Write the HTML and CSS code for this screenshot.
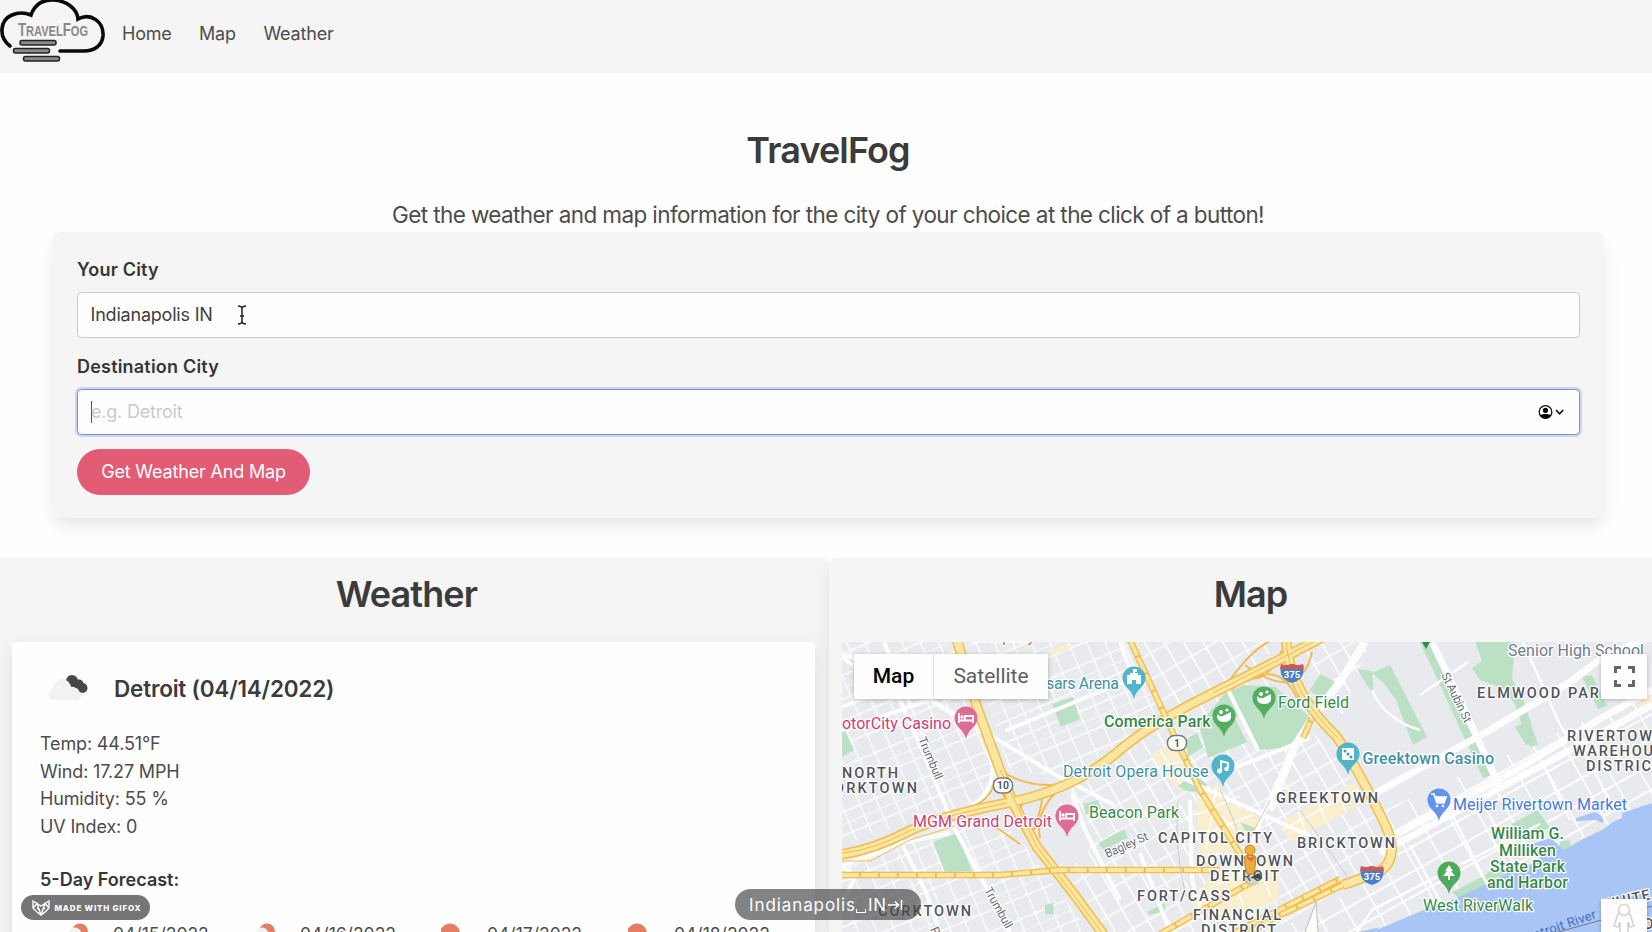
FILE: index.html
```html
<!DOCTYPE html>
<html lang="en">
<head>
<meta charset="utf-8">
<title>TravelFog</title>
<link rel="stylesheet" href="styles.css">
</head>
<body>
<nav class="navbar">
  <svg class="logo" viewBox="0 0 106 66" width="106" height="66">
    <g fill="none" stroke="#090909" stroke-width="3.6" stroke-linecap="round">
      <path d="M10 46C-2 37 0 20 12 15Q21 11 31 15C35 3 45 -1 54 0C66 1 77 8 78 19C91 12 104 22 103 36C102 46 94 51 84 51H60"/>
    </g>
    <text x="18" y="36" textLength="70" lengthAdjust="spacingAndGlyphs" class="logo-text"><tspan font-size="18">T</tspan>RAVEL<tspan font-size="18">F</tspan>OG</text>
    <g fill="#8b8b8b" stroke="#222" stroke-width="1.5"><rect x="20" y="40.5" width="36" height="4.5" rx="2"/><rect x="13.5" y="48.5" width="36" height="4.5" rx="2"/><rect x="23.5" y="56.5" width="36" height="4.5" rx="2"/></g>
  </svg>
  <a class="nav-home">Home</a><a class="nav-map">Map</a><a class="nav-weather">Weather</a>
</nav>
<header class="hero">
  <h1 class="title">TravelFog</h1>
  <p class="subtitle">Get the weather and map information for the city of your choice at the click of a button!</p>
</header>
<section class="search">
  <div class="label l1">Your City</div>
  <div class="input"><span class="value">Indianapolis IN</span>
    <svg class="ibeam" width="10" height="20" viewBox="0 0 10 20" fill="none" stroke="#222" stroke-width="1.5"><path d="M1 1Q5 1 5 4Q5 1 9 1M5 3V17M1 19Q5 19 5 16Q5 19 9 19M3 11H7"/></svg>
  </div>
  <div class="label l2">Destination City</div>
  <div class="input focused"><i class="caret"></i><span class="placeholder">e.g. Detroit</span>
    <svg class="account" width="27" height="16" viewBox="0 0 27 16"><circle cx="7.5" cy="8" r="6.3" fill="none" stroke="#111" stroke-width="1.3"/><circle cx="7.5" cy="6.3" r="2.6"/><path d="M2.4 11Q7.5 8.8 12.6 11Q10.5 14.5 7.5 14.5T2.4 11"/><path d="M18 6l3.6 3.8L25.2 6" fill="none" stroke="#111" stroke-width="1.7"/></svg>
  </div>
  <div class="button"><span>Get Weather And Map</span></div>
</section>
<main class="columns">
  <section class="column weather">
    <h2 class="title">Weather</h2>
    <div class="card">
      <div class="city">
        <svg width="42" height="28" viewBox="0 0 42 28"><g fill="#484848"><circle cx="24" cy="7" r="6"/><circle cx="31" cy="10" r="4.5"/><circle cx="34.500" cy="14" r="5"/><path d="M20 9L33 18L35 10L26 4"/></g><g fill="#f2f2f2"><circle cx="7" cy="20" r="6.5"/><circle cx="14" cy="14" r="9"/><circle cx="26" cy="19" r="5.500"/><rect x="6" y="17" width="27" height="9.5" rx="4.5"/></g></svg>
        <h3>Detroit (04/14/2022)</h3>
      </div>
      <ul class="facts"><li class="f1">Temp: 44.51°F</li><li class="f2">Wind: 17.27 MPH</li><li class="f3">Humidity: 55 %</li><li class="f4">UV Index: 0</li></ul>
      <h4>5-Day Forecast:</h4>
      <div class="forecast">
        <div class="day"><svg width="22" height="24" viewBox="0 0 22 24"><circle cx="13" cy="8.5" r="8" fill="#e57e60"/><circle cx="8" cy="11" r="6.5" fill="#f2f2f2"/></svg><span>04/15/2022</span></div>
        <div class="day"><svg width="22" height="24" viewBox="0 0 22 24"><circle cx="13" cy="8.5" r="8" fill="#e57e60"/><circle cx="8" cy="11" r="6.5" fill="#f2f2f2"/></svg><span>04/16/2022</span></div>
        <div class="day"><svg width="22" height="24" viewBox="0 0 22 24"><circle cx="9" cy="10.5" r="10" fill="#e57e60"/></svg><span>04/17/2022</span></div>
        <div class="day"><svg width="22" height="24" viewBox="0 0 22 24"><circle cx="9" cy="10.5" r="10" fill="#e57e60"/></svg><span>04/18/2022</span></div>
      </div>
    </div>
  </section>
  <section class="column mapcol">
    <h2 class="title">Map</h2>
    <div class="map">
    <svg class="mapart" viewBox="842 642 810 290" width="810" height="290">
      <defs>
        <pattern id="gw" width="17" height="42" patternUnits="userSpaceOnUse" patternTransform="translate(842 642) rotate(-23)"><path d="M0 0H17M0 11H17M0 31H17M4 0V42" stroke="#fdfdfe" stroke-width="1.3" fill="none"/></pattern>
        <pattern id="gd" width="17" height="23" patternUnits="userSpaceOnUse" patternTransform="translate(1120 642) rotate(-30)"><path d="M0 2H17M4 0V23" stroke="#fdfdfe" stroke-width="1.7" fill="none"/></pattern>
        <pattern id="ge" width="27" height="22" patternUnits="userSpaceOnUse" patternTransform="translate(1380 812) rotate(-29)"><path d="M0 2H27M4 0V22" stroke="#fdfdfe" stroke-width="1.8" fill="none"/></pattern>
        <path id="pin" d="M0 0C-2-10-11.500-12-11.500-21A11.500 11.500 0 0 1 11.500-21C11.500-12 2-10 0 0Z"/>
        <g id="shield"><path d="M-11-7Q-6-6 0-8Q6-6 11-7Q14 7 0 11Q-14 7-11-7" fill="#4c7fca"/><path d="M-11-8Q-6-6 0-8Q6-6 11-8L12-3H-12Z" fill="#cf5a54"/><text y="6" text-anchor="middle" class="shieldt">375</text></g>
        <g id="bed"><path d="M-7-26V-16M-7-18.500H7V-16M7-18.500V-23H-1V-19" stroke="#fff" stroke-width="1.800" fill="none"/><circle cx="-4" cy="-22" r="1.700" fill="#fff"/></g>
        <g id="stadium" fill="#fff"><path d="M-7-23Q-4-20-1-21L7-25V-19Q6-15 0-15Q-8-15-7-23"/><circle cx="-3" cy="-25" r="2"/><circle cx="3" cy="-27" r="1.600"/></g>
      </defs>
      <rect x="842" y="642" width="810" height="290" fill="#e8eaed"/>
      <path d="M842 642H960L1002 770L990 797L842 845Z" fill="url(#gw)"/>
      <path d="M842 860L990 812L1022 842L1090 932H842Z" fill="url(#gw)"/>
      <path d="M968 642H1128L1166 720L1065 776L1010 772Z" fill="url(#gw)"/>
      <path d="M1070 780L1130 745L1260 670L1380 810L1390 860L1270 932H1105L1040 848Z" fill="url(#gd)"/>
      <path d="M1128 642H1280L1260 665L1166 716ZM1300 642H1370L1340 720Z" fill="url(#gd)"/>
      <path d="M1380 812L1652 690V810L1370 932H1275L1390 870Z" fill="url(#ge)"/>
      <ellipse cx="1066" cy="838" rx="25" ry="27" fill="#e8eaed"/>
      <g fill="#f9efce"><path d="M1150 755L1175 742L1195 780L1180 791ZM1197 795L1217 785L1255 823L1237 850L1199 855ZM1235 806L1262 818L1251 832L1232 819ZM1278 823L1355 782L1364 802L1292 842ZM1215 872L1280 856L1278 900L1220 922L1190 905ZM1048 652L1068 643L1070 649L1051 655ZM1638 702L1652 696V706L1641 709Z"/></g>
      <path d="M1198 796L1248 840M1196 815L1240 796M1200 836L1252 815M1206 850L1216 788M1282 830L1358 790M1298 812L1306 832M1318 802L1326 822M1338 791L1346 812M1216 885L1280 862M1230 868L1244 908M1258 862L1270 896M1160 750L1182 786M1154 768L1188 760" fill="none" stroke="#fdfdfe" stroke-width="1.600"/>
      <g fill="#bce0c4"><path d="M1199 725L1226 692L1245 685L1275 687L1310 717L1297 747L1258 750L1241 713L1235 718L1247 742L1208 758Z"/><path d="M1185 740L1197 732L1203 747L1188 757ZM1178 786Q1194 772 1208 785Q1194 798 1178 786M1052 704L1073 697L1080 719L1061 727ZM933 842L957 833L972 871L945 872ZM842 724L854 750L842 757ZM1083 804L1098 800L1102 810L1086 815ZM1098 843L1124 829L1128 838L1103 850ZM1310 690L1320 674L1334 681V692L1320 700ZM1240 822L1255 828L1250 837ZM1147 912L1165 903V911L1150 915ZM1045 905L1053 903L1054 914L1045 914Z"/><path d="M1372 673L1390 665L1427 737L1413 745L1396 700L1384 683ZM1420 642H1432L1492 775L1483 778ZM1475 642H1515L1512 679L1523 699L1538 745L1530 747L1515 705L1505 689L1480 680L1472 668L1482 661ZM1515 727L1530 719L1536 742L1526 745ZM1582 677L1592 675L1607 706L1598 709ZM1512 824L1538 810L1550 828L1518 838ZM1452 892L1482 877L1500 864L1515 878L1460 899ZM1560 842L1569 840L1572 849L1560 853ZM1357 669L1372 671L1374 695L1367 685Z"/></g>
      <path d="M1372 932L1419 912L1455 899L1486 884L1520 868L1542 861L1532 844L1551 838L1564 850L1583 839L1602 830L1613 822L1622 818V813L1652 803V932ZM1576 818L1595 812Q1605 816 1603 823L1595 820L1576 821ZM1358 932L1377 928L1385 932Z" fill="#a9c5f6"/>
      <g class="road"><path d="M842 654L870 664L990 735L1056 775L1114 805M842 707L960 662M842 730L930 700L977 729M900 700L923 752L950 817M842 657L900 700M884 642L910 704M972 806Q993 792 993 765L980 720M950 820L1010 932M902 844L925 890L940 932M842 866L902 843L950 833M842 866L855 877L842 905M1005 731L1128 680M1072 793L1085 830L1120 900M1120 642L1134 680M1228 690L1258 750M1208 932L1192 880L1190 800M1220 772L1250 762L1310 738M1165 770L1310 836M1240 875L1265 810L1293 747M1140 853L1170 932" stroke-width="4"/><path d="M1365 642L1340 682L1318 710L1294 747L1270 810" stroke-width="8"/><path d="M1372 795L1490 730L1570 682L1602 658L1652 635M1395 835L1450 806L1520 768L1598 720L1652 690M1380 853L1450 815L1570 750L1652 705M1432 642L1460 700L1500 788" stroke-width="7"/><path d="M1355 935L1372 910L1540 824M1523 642L1560 725L1570 740M1468 662L1420 695M1580 745L1615 810M1450 810L1490 890M1480 795L1517 872M1410 845L1445 910M1372 690Q1385 720 1420 730M1544 766L1570 820" stroke-width="2.5"/></g>
      <g class="road ramps"><path d="M1003 772Q1025 786 1052 785M960 813Q995 799 994 780M993 806L1055 790M1020 808Q1030 790 1042 793Q1044 800 1034 830M1040 838Q1035 815 1055 793M987 821L1020 844M1000 789L1030 842M1226 686Q1250 650 1272 640M1240 674Q1265 690 1282 650M1245 665Q1300 705 1312 652M1246 682Q1280 660 1298 700"/></g>
      <g class="fwyout" stroke-width="10.500"><path d="M957 640L977 707L1000 770L1013 803L1037 847L1073 893L1104 935"/><path d="M838 855Q873 850 907 832Q940 816 1007 803T1120 750Q1150 724 1213 693T1323 637"/><path d="M1286 638Q1288 690 1337 737Q1355 764 1383 820Q1402 857 1379 872L1343 885"/></g>
      <g class="fwyin" stroke-width="7.500"><path d="M957 640L977 707L1000 770L1013 803L1037 847L1073 893L1104 935"/><path d="M838 855Q873 850 907 832Q940 816 1007 803T1120 750Q1150 724 1213 693T1323 637"/><path d="M1286 638Q1288 690 1337 737Q1355 764 1383 820Q1402 857 1379 872L1343 885"/></g>
      <g class="fwyout" stroke-width="1"><path d="M842 853Q873 850 907 832Q940 816 1007 803M1000 770L1037 847L1104 935M1213 693T1323 637M1286 638Q1288 690 1337 737M842 861L870 861L910 840L955 826"/></g>
      <g class="fwyout" stroke-width="6.500"><path d="M842 875H1000L1060 870H1220M1130 640L1167 720L1200 790L1245 862M1160 934L1250 883M1303 738L1312 718M1248 934L1270 920L1343 885M1236 932L1340 879"/></g>
      <g class="fwyin" stroke-width="3.800" stroke-dasharray="17 2"><path d="M842 875H1000L1060 870H1220M1130 640L1167 720L1200 790L1245 862M1160 934L1250 883M1303 738L1312 718M1248 934L1270 920L1343 885M1236 932L1340 879"/></g>
      <g fill="none" stroke="#c9ccd0" stroke-width="1"><path d="M1178 800Q1174 850 1186 896M1220 790Q1240 830 1238 842M1300 810L1350 880M1248 842L1270 800"/></g>
      <path d="M1305 932L1316 902L1318 932" fill="#fff" stroke="#bbb"/>
      <path d="M1540 937L1652 906" stroke="#777" stroke-width="1"/>
      <g><use href="#pin" x="966" y="739" fill="#df6c96"/><use href="#bed" x="966" y="739"/><use href="#pin" x="1067" y="837" fill="#df6c96"/><use href="#bed" x="1067" y="837"/>
      <use href="#pin" x="1134" y="699" fill="#51b5c9"/><path d="M1127 684V675H1130V673H1133V669H1137V672H1135V673H1138V675H1141V684H1136V680H1132V684Z" fill="#fff"/>
      <use href="#pin" x="1224" y="737" fill="#55ad61"/><use href="#stadium" x="1224" y="737"/><use href="#pin" x="1264" y="719" fill="#55ad61"/><use href="#stadium" x="1264" y="719"/>
      <use href="#pin" x="1223" y="787" fill="#51b5c9"/><path d="M1221 771V761L1228 763V768" fill="none" stroke="#fff" stroke-width="2"/><circle cx="1219.500" cy="771" r="2.500" fill="#fff"/><circle cx="1226.500" cy="769" r="2.200" fill="#fff"/>
      <use href="#pin" x="1348" y="775" fill="#51b5c9"/><rect x="1342" y="748" width="12" height="12" fill="#fff"/><g fill="#329db4"><circle cx="1345" cy="751" r="1.500"/><circle cx="1348" cy="754" r="1.500"/><circle cx="1351" cy="757" r="1.500"/></g>
      <use href="#pin" x="1439" y="821" fill="#6393ec"/><path d="M1431 794H1434L1437 803H1444L1446 797H1435" fill="none" stroke="#fff" stroke-width="1.700"/><path d="M1435 797H1446L1444 802H1437Z" fill="#fff"/><circle cx="1437" cy="806" r="1.300" fill="#fff"/><circle cx="1443" cy="806" r="1.300" fill="#fff"/>
      <use href="#pin" x="1449" y="894" fill="#4fab5c"/><path d="M1449 865L1453 871H1451L1455 876H1450V880H1448V876H1443L1447 871H1445Z" fill="#fff"/><path d="M1422 642H1430L1426 649Z" fill="#318b45"/></g>
      <use href="#shield" x="1292" y="672"/><use href="#shield" x="1372" y="874"/>
      <g fill="#fff" stroke="#777b80" stroke-width="1.500"><rect x="993.500" y="778" width="19" height="15" rx="7"/><rect x="1167.500" y="735.500" width="19" height="15" rx="7"/></g><g class="routet"><text x="1003" y="789">10</text><text x="1177" y="746.500">1</text></g>
      <g class="halo pink"><text x="842" y="730" textLength="109">otorCity Casino</text><text x="913" y="828" textLength="139">MGM Grand Detroit</text></g>
      <g class="halo teal"><text x="1046" y="689.500" textLength="73">sars Arena</text><text x="1063" y="777.500" textLength="145.500">Detroit Opera House</text><text x="1362.500" y="765" textLength="131.500" class="mid">Greektown Casino</text></g>
      <g class="halo green"><text x="1104" y="727.500" textLength="106.500" class="mid">Comerica Park</text><text x="1278" y="708.500" textLength="71">Ford Field</text><text x="1089" y="819" textLength="90">Beacon Park</text><text x="1423" y="911.500" textLength="110">West RiverWalk</text><g class="mid"><text x="1491" y="840" textLength="73">William G.</text><text x="1499" y="856.500" textLength="57">Milliken</text><text x="1490" y="872.500" textLength="75">State Park</text><text x="1487" y="888.500" textLength="81">and Harbor</text></g></g>
      <g class="halo"><text x="1453" y="811" textLength="174" fill="#427bdf">Meijer Rivertown Market</text><text x="1508" y="656.500" textLength="136" fill="#6d7b8b">Senior High School</text><text x="970" y="642.500" textLength="65" fill="#db7420">Company</text></g>
      <g class="halo area"><text x="842" y="779" textLength="56">NORTH</text><text x="834" y="794" textLength="83">ORKTOWN</text><text x="878" y="917" textLength="93">CORKTOWN</text><text x="1158" y="844" textLength="114">CAPITOL CITY</text><text x="1196" y="867" textLength="97">DOWNTOWN</text><text x="1210" y="882" textLength="69">DETROIT</text><text x="1137" y="901.500" textLength="93">FORT/CASS</text><text x="1193" y="921" textLength="88">FINANCIAL</text><text x="1201" y="935.500" textLength="75">DISTRICT</text><text x="1276" y="804" textLength="102">GREEKTOWN</text><text x="1297" y="848.500" textLength="98">BRICKTOWN</text><text x="1477" y="699" textLength="122">ELMWOOD PAR</text><text x="1567" y="742" textLength="85">RIVERTOW</text><text x="1573" y="756.500" textLength="80">WAREHOU</text><text x="1586" y="772" textLength="65">DISTRIC</text><text transform="translate(1604 911) rotate(-13)" textLength="48">WHITE</text><text x="1644" y="930">D</text></g>
      <g class="halo street"><text transform="translate(918 740) rotate(67)" textLength="45">Trumbull</text><text transform="translate(984 891) rotate(61)" textLength="45">Trumbull</text><text transform="translate(1441 676) rotate(64)" textLength="54">St Aubin St</text><text transform="translate(1107 859) rotate(-24)" textLength="46">Bagley St</text><text transform="translate(930 930) rotate(67)">Rosa</text></g>
      <text transform="translate(1527 942) rotate(-19)" class="river" textLength="74">Detroit River</text>
      <circle cx="1252" cy="877" r="9" fill="#777" opacity=".25"/><path d="M1250 878L1259 873L1262 879Z" fill="#444"/><circle cx="1250" cy="850" r="5" fill="#f3b036" stroke="#b38738"/><path d="M1244 857Q1250 853 1256 857L1255 868L1253 874H1247L1245 866Z" fill="#eaaa3c" stroke="#c38a2c"/><path d="M1247 857L1251 860L1254 857" stroke="#df633b" stroke-width="2" fill="none"/>
    </svg>
    <div class="maptype"><span class="active">Map</span><span class="sat">Satellite</span></div>
    <div class="fullscreen"><svg width="21" height="21" viewBox="0 0 21 21" fill="none" stroke="#666" stroke-width="3"><path d="M1.500 7V1.500H7M14 1.500H19.500V7M19.500 14V19.500H14M7 19.500H1.500V14"/></svg></div>
    <div class="pegman"><svg width="24" height="30" viewBox="0 0 24 30" fill="#fff" stroke="#d2d2d2" stroke-width="1.500"><path d="M6 10Q12 6 18 10L22 22L18 23L16 18V30H8V18L6 23L2 22Z"/><circle cx="12" cy="6" r="5.500"/></svg></div>
    </div>
  </section>
</main>
<div class="gifox"><svg width="18" height="16" viewBox="0 0 18 16" fill="none" stroke="#fff" stroke-width="1.400"><path d="M1 1L5 3.500L9 6L13 3.500L17 1L17 8L13 12L9 15L5 12L1 8ZM1 8L5 3.500L9 15L13 3.500L17 8M5 8L8 10M13 8L10 10"/></svg><span>MADE WITH GIFOX</span></div>
<div class="keys"><span>Indianapolis<i class="space"></i>IN</span><svg width="16" height="12" viewBox="0 0 16 12" fill="none" stroke="#fff" stroke-width="1.500"><path d="M1 6H11M8 2.500L11.500 6L8 9.500M14.500 1V11"/></svg></div>
</body>
</html>
```

FILE: styles.css
```css
* { box-sizing: border-box; }
body { margin: 0; height: 932px; overflow: hidden; background: #fefefe; font-family: Inter, "Liberation Sans", sans-serif; font-size: 18.500px; color: #4c4c4c; }
h1, h2, h3, h4, p, ul { margin: 0; padding: 0; }
.navbar { height: 73px; background: #f5f5f5; display: flex; line-height: 28px; padding-right: 20px; }
.logo { margin-right: 16px; }
.logo-text { font: bold 15px "Liberation Sans", sans-serif; fill: #888; }
.navbar a { margin-top: 20px; font-size: 18px; letter-spacing: -.2px; }
.nav-home { width: 77px; }
.nav-map { width: 64.500px; }
.hero { height: 158.500px; text-align: center; padding: 56px 0 0 4px; }
.title { font-size: 36px; font-weight: 600; line-height: 42px; color: #3b3b3b; text-align: center; letter-spacing: -0.9px; }
.subtitle { font-size: 22.500px; line-height: 30px; margin-top: 29px; letter-spacing: -0.6px; }
.search { margin: 0 48px 0 53px; height: 286px; padding: 24px 24px 0; border-radius: 7px; background: #f5f5f5; box-shadow: 0 9px 18px -2px rgba(10,10,10,.1); }
.label { font-size: 18px; font-weight: 600; line-height: 28px; color: #363636; letter-spacing: .2px; }
.l1 { margin-bottom: 8px; }
.l2 { margin: 15px 0 8px; }
.input { height: 46px; border: 1.500px solid #c8cbcc; border-radius: 4.500px; background: #fefefe; display: flex; align-items: center; padding: 0 14px 0 12.500px; font-size: 18px; color: #404040; letter-spacing: -.2px; }
.ibeam { margin-left: 24px; }
.focused { border-color: #7d91d6; box-shadow: 0 0 0 2px rgba(72,95,199,.22); }
.caret { width: 1.500px; height: 22px; background: #555; margin-right: -1px; }
.placeholder { color: #c8cacc; flex: 1; }
.button { width: 233px; height: 46.500px; margin-top: 14px; border-radius: 24px; background: #e15c74; color: #fff; display: flex; align-items: center; justify-content: center; font-size: 18px; letter-spacing: -.17px; }
.columns { display: flex; margin-top: 40.500px; }
.column { height: 380px; background: #f5f5f5; box-shadow: 0 9px 18px -2px rgba(10,10,10,.1); padding-top: 15px; border-radius: 7px 0 0 0; }
.weather { width: 829px; padding-left: 12px; padding-right: 14px; border-radius: 0 7px 0 0; }
.weather .title { padding-right: 14px; }
.mapcol { width: 823px; padding-left: 13px; }
.mapcol .title { margin-left: 7px; }
.card { height: 310px; margin-top: 27px; padding: 29px 28px; border-radius: 4px; background: #fefefe; box-shadow: 0 5px 18px rgba(10,10,10,.09); }
.city { display: flex; height: 34px; align-items: center; padding-left: 8px; }
.city h3 { margin-left: 24px; font-size: 22.500px; font-weight: 600; color: #3b3b3b; letter-spacing: -.2px; }
.facts { list-style: none; margin-top: 25px; line-height: 27.700px; font-size: 18px; letter-spacing: -.15px; }
.card h4 { font-size: 18px; font-weight: 600; color: #363636; line-height: 28px; margin-top: 25px; }
.forecast { display: flex; margin-top: 29px; font-size: 17.500px; padding-left: 27px; }
.day { display: flex; flex: 0 0 187px; line-height: 28px; }
.day span { margin: -3px 0 0 24px; }
.map { height: 290px; margin-top: 27px; position: relative; overflow: hidden; font-family: Roboto, sans-serif; }
.mapart { display: block; }
.road { fill: none; stroke: #fdfdfe; }
.ramps { stroke: #efbd50; stroke-width: 2; }
.fwyout { fill: none; stroke: #efbd50; }
.fwyin { fill: none; stroke: #fae5a1; }
.halo { font: 16px Roboto, sans-serif; paint-order: stroke; stroke: #fff; stroke-width: 2.500px; stroke-linejoin: round; transform: translateY(-1px); }
.pink { fill: #cf3c73; }
.teal { fill: #3c92a5; }
.green { fill: #35894a; }
.mid { font-weight: 500; }
.area { font-size: 14.500px; fill: #50545a; font-weight: 500; }
.street { font-size: 12px; fill: #666b70; }
.river { font: 13px Roboto, sans-serif; fill: #466fc2; }
.shieldt { font: bold 9.500px Roboto, sans-serif; fill: #fff; }
.routet { font: 500 10.500px Roboto, sans-serif; fill: #444; text-anchor: middle; }
.maptype { position: absolute; left: 12px; top: 12px; height: 45px; width: 194px; display: flex; align-items: center; background: #fefefe; box-shadow: 0 1px 4px rgba(0,0,0,.28); font-size: 21px; }
.maptype span { line-height: 45px; text-align: center; }
.active { width: 80px; color: #000; font-weight: 500; border-right: 1px solid #e2e2e2; }
.sat { flex: 1; color: #606060; }
.fullscreen, .pegman { position: absolute; left: 759px; width: 46px; background: #fefefe; box-shadow: 0 1px 4px rgba(0,0,0,.25); display: flex; justify-content: center; }
.fullscreen { top: 12px; height: 45px; align-items: center; }
.pegman { top: 257px; height: 45px; padding-top: 5px; }
.gifox { position: absolute; left: 21px; top: 895px; width: 129px; height: 25px; border-radius: 13px; background: #747574; color: #fff; display: flex; align-items: center; padding-left: 10.500px; font-size: 8px; font-weight: 800; gap: 5px; white-space: nowrap; letter-spacing: .8px; }
.keys { position: absolute; left: 735px; top: 889px; width: 186px; height: 31px; border-radius: 16px; background: rgba(70,70,70,.67); color: #fff; display: flex; align-items: center; padding-left: 14px; font-size: 17px; letter-spacing: .9px; white-space: nowrap; }
.space { display: inline-block; width: 10px; height: 4px; margin: 0 2px -2px 0; border: 1.500px solid #fff; border-top: 0; }
```
